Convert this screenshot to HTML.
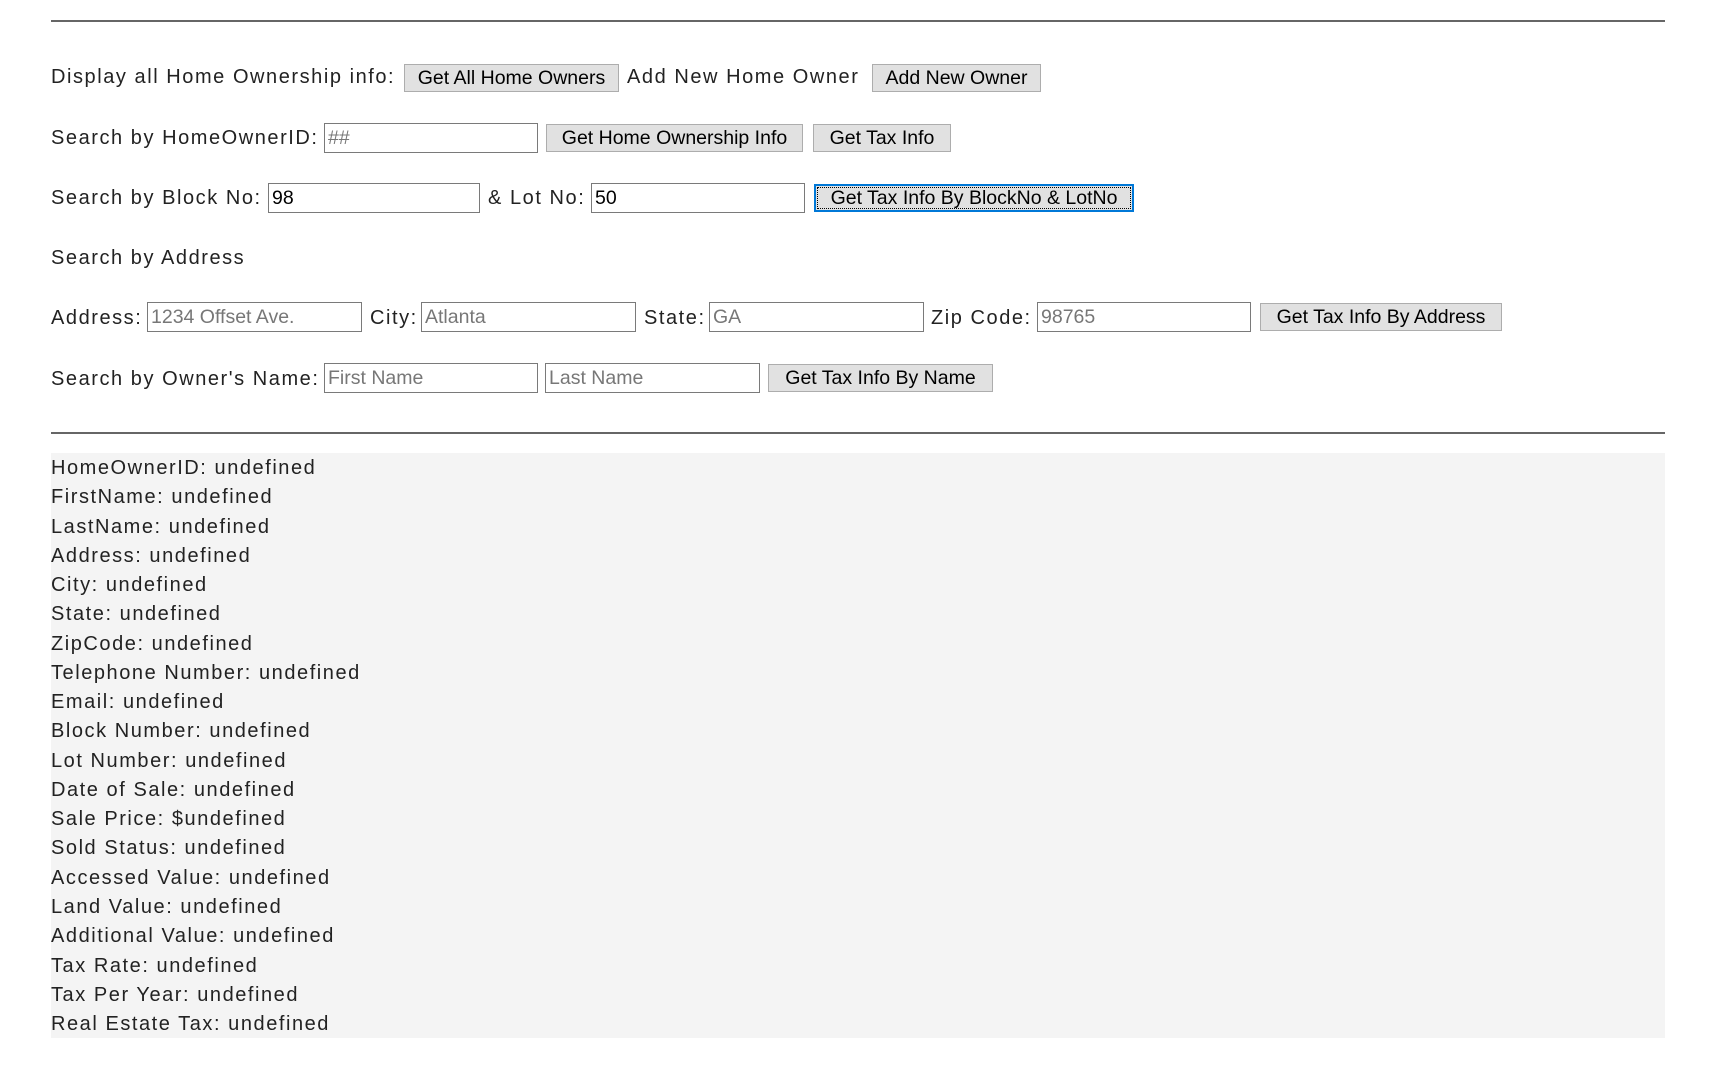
<!DOCTYPE html>
<html><head><meta charset="utf-8">
<style>
html,body{margin:0;padding:0;background:#fff;width:1720px;height:1089px;overflow:hidden;position:relative;font-family:"Liberation Sans",sans-serif;color:#222;}
.t{position:absolute;font-size:20px;letter-spacing:1.55px;line-height:24px;white-space:nowrap;}
.b{position:absolute;box-sizing:border-box;background:#e1e1e1;border:1px solid #adadad;font-size:19.5px;line-height:26px;text-align:center;color:#000;white-space:nowrap;}
.i{position:absolute;box-sizing:border-box;background:#fff;border:1px solid #7a7a7a;height:30px;font-size:19.5px;line-height:28px;padding-left:3px;color:#777;white-space:nowrap;overflow:hidden;}
.i.v{color:#000;}
hr{position:absolute;left:51px;width:1614px;margin:0;border:0;border-top:2px solid #666;height:0;}
#res{position:absolute;left:51px;top:453px;width:1614px;height:585px;background:#f4f4f4;}
#res div{font-size:20px;letter-spacing:1.55px;height:29.27px;line-height:29.27px;white-space:nowrap;}
</style></head><body>
<hr style="top:20px">
<div class="t" style="left:51px;top:65px">Display all Home Ownership info:</div>
<div class="b" style="left:404px;top:64px;width:215px;height:28px">Get All Home Owners</div>
<div class="t" style="left:627px;top:65px">Add New Home Owner</div>
<div class="b" style="left:872px;top:64px;width:169px;height:28px">Add New Owner</div>

<div class="t" style="left:51px;top:126px">Search by HomeOwnerID:</div>
<div class="i" style="left:324px;top:123px;width:214px">##</div>
<div class="b" style="left:546px;top:124px;width:257px;height:28px">Get Home Ownership Info</div>
<div class="b" style="left:813px;top:124px;width:138px;height:28px">Get Tax Info</div>

<div class="t" style="left:51px;top:186px">Search by Block No:</div>
<div class="i v" style="left:268px;top:183px;width:212px">98</div>
<div class="t" style="left:488px;top:186px">&amp; Lot No:</div>
<div class="i v" style="left:591px;top:183px;width:214px">50</div>
<div class="b" style="left:814px;top:184px;width:320px;height:28px;border:2px solid #0078d7;outline:1px dotted #000;outline-offset:-4px;line-height:24px">Get Tax Info By BlockNo &amp; LotNo</div>

<div class="t" style="left:51px;top:246px">Search by Address</div>

<div class="t" style="left:51px;top:306px">Address:</div>
<div class="i" style="left:147px;top:302px;width:215px">1234 Offset Ave.</div>
<div class="t" style="left:370px;top:306px">City:</div>
<div class="i" style="left:421px;top:302px;width:215px">Atlanta</div>
<div class="t" style="left:644px;top:306px">State:</div>
<div class="i" style="left:709px;top:302px;width:215px">GA</div>
<div class="t" style="left:931px;top:306px">Zip Code:</div>
<div class="i" style="left:1037px;top:302px;width:214px">98765</div>
<div class="b" style="left:1260px;top:303px;width:242px;height:28px">Get Tax Info By Address</div>

<div class="t" style="left:51px;top:367px">Search by Owner's Name:</div>
<div class="i" style="left:324px;top:363px;width:214px">First Name</div>
<div class="i" style="left:545px;top:363px;width:215px">Last Name</div>
<div class="b" style="left:768px;top:364px;width:225px;height:28px">Get Tax Info By Name</div>

<hr style="top:432px">
<div id="res">
<div style="margin-top:1px">HomeOwnerID: undefined</div>
<div>FirstName: undefined</div>
<div>LastName: undefined</div>
<div>Address: undefined</div>
<div>City: undefined</div>
<div>State: undefined</div>
<div>ZipCode: undefined</div>
<div>Telephone Number: undefined</div>
<div>Email: undefined</div>
<div>Block Number: undefined</div>
<div>Lot Number: undefined</div>
<div>Date of Sale: undefined</div>
<div>Sale Price: $undefined</div>
<div>Sold Status: undefined</div>
<div>Accessed Value: undefined</div>
<div>Land Value: undefined</div>
<div>Additional Value: undefined</div>
<div>Tax Rate: undefined</div>
<div>Tax Per Year: undefined</div>
<div>Real Estate Tax: undefined</div>
</div>
</body></html>
